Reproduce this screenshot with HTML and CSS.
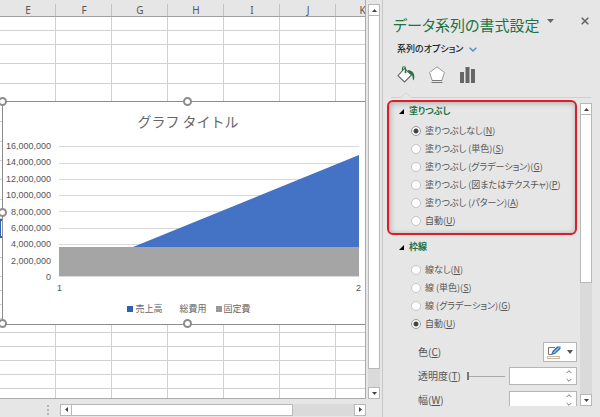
FILE: index.html
```html
<!DOCTYPE html>
<html lang="ja">
<head>
<meta charset="utf-8">
<title>データ系列の書式設定</title>
<link rel="stylesheet" href="styles.css">
</head>
<body>
<div class="app">
  <main class="workbook">
    <div class="upper">
      <div class="sheet">
        <table class="cells">
          <thead><tr><th>E</th><th>F</th><th>G</th><th>H</th><th>I</th><th>J</th><th>K</th></tr></thead>
          <tbody>
            <tr><td><td><td><td><td><td><td></tr>
            <tr><td><td><td><td><td><td><td></tr>
            <tr><td><td><td><td><td><td><td></tr>
            <tr><td><td><td><td><td><td><td></tr>
            <tr><td><td><td><td><td><td><td></tr>
            <tr><td><td><td><td><td><td><td></tr>
            <tr><td><td><td><td><td><td><td></tr>
            <tr><td><td><td><td><td><td><td></tr>
            <tr><td><td><td><td><td><td><td></tr>
            <tr><td><td><td><td><td><td><td></tr>
            <tr><td><td><td><td><td><td><td></tr>
            <tr class="picked"><td><td><td><td><td><td><td></tr>
            <tr><td><td><td><td><td><td><td></tr>
            <tr><td><td><td><td><td><td><td></tr>
            <tr><td><td><td><td><td><td><td></tr>
            <tr><td><td><td><td><td><td><td></tr>
            <tr><td><td><td><td><td><td><td></tr>
            <tr><td><td><td><td><td><td><td></tr>
            <tr><td><td><td><td><td><td><td></tr>
            <tr><td><td><td><td><td><td><td></tr>
            <tr><td><td><td><td><td><td><td></tr>
            <tr><td><td><td><td><td><td><td></tr>
            <tr><td><td><td><td><td><td><td></tr>
          </tbody>
        </table>

        <section class="chart">
          <h2 class="chart-title">グラフ タイトル</h2>
          <div class="plot-row">
            <ul class="y-axis">
              <li>16,000,000</li><li>14,000,000</li><li>12,000,000</li><li>10,000,000</li><li>8,000,000</li><li>6,000,000</li><li>4,000,000</li><li>2,000,000</li><li>0</li>
            </ul>
            <svg class="plot" viewBox="0 0 300 131" preserveAspectRatio="none">
              <path d="M0 .5H300M0 17.500H300M0 33.500H300M0 49.500H300M0 65.500H300M0 82.500H300M0 98.500H300M0 114.500H300M0 130.500H300" stroke="#d9d9d9" fill="none"/>
              <path d="M74 101L300 9V101Z" fill="#4472c4"/>
              <path d="M0 101H300V130H0Z" fill="#a5a5a5"/>
            </svg>
          </div>
          <div class="x-axis"><span>1</span><span>2</span></div>
          <ul class="legend">
            <li><i class="key blue"></i>売上高</li>
            <li><i class="key"></i>総費用</li>
            <li><i class="key grey"></i>固定費</li>
          </ul>
          <i class="handle top-left"></i><i class="handle top"></i><i class="handle left"></i><i class="handle bottom-left"></i><i class="handle bottom"></i>
        </section>
      </div>
      <div class="vbar sheet-vbar">
        <button class="cap" aria-label="上へ"><svg viewBox="0 0 5 3"><path d="M0 3L2.500 0L5 3Z"/></svg></button>
        <div class="thumb"></div>
        <div class="track"></div>
        <button class="cap" aria-label="下へ"><svg viewBox="0 0 5 3"><path d="M0 0H5L2.500 3Z"/></svg></button>
      </div>
    </div>
    <div class="lower">
      <svg class="grip" viewBox="0 0 2 10"><path d="M0 0H2V2H0ZM0 4H2V6H0ZM0 8H2V10H0Z"/></svg>
      <div class="hbar">
        <button class="cap" aria-label="左へ"><svg class="side" viewBox="0 0 3 5"><path d="M3 0V5L0 2.500Z"/></svg></button>
        <div class="thumb"></div>
        <div class="track"></div>
        <button class="cap" aria-label="右へ"><svg class="side" viewBox="0 0 3 5"><path d="M0 0V5L3 2.500Z"/></svg></button>
      </div>
    </div>
  </main>

  <aside class="pane">
    <header class="pane-head">
      <h1>データ系列の書式設定</h1>
      <button class="plain menu" aria-label="作業ウィンドウ オプション"><svg width="7" height="4" viewBox="0 0 7 4"><path d="M0 0H7L3.500 4Z" fill="#666"/></svg></button>
      <button class="plain close" aria-label="閉じる"><svg width="8" height="8" viewBox="0 0 8 8"><path d="M.7.7L7.300 7.300M7.300.7L.7 7.300" stroke="#666" stroke-width="1.600"/></svg></button>
    </header>
    <button class="plain series">系列のオプション<svg width="8" height="5" viewBox="0 0 8 5"><path d="M.7.7L4 4L7.300.7" fill="none" stroke="#3c8fd0" stroke-width="1.300"/></svg></button>
    <nav class="tabs">
      <button class="plain" aria-label="塗りつぶしと線"><svg width="18" height="18" viewBox="0 0 18 18"><path d="M7.500 2.500L14.500 9L7.500 16L1 9.700Z" fill="#fff" stroke="#666" stroke-width="1.100"/><path d="M5.500 5V2.200Q5.500.8 7 .8Q8.500.8 8.500 2.200V6" fill="none" stroke="#217346" stroke-width="1.100"/><circle cx="8.500" cy="6.300" r="1" fill="#217346"/><path d="M11 4Q16 4.500 17.200 9Q17.600 12 16.700 14.500Q15.500 13 15.300 9.500L11 5.500Z" fill="#217346"/></svg></button>
      <button class="plain" aria-label="効果"><svg width="18" height="18" viewBox="0 0 18 18"><path d="M9 .8L16.500 6.500L13.800 14.500H4.200L1.500 6.500Z" fill="#fff" stroke="#999"/><path d="M4 14.500H14M3.500 16.500H14.500" stroke="#777" stroke-width="1.200"/></svg></button>
      <button class="plain" aria-label="系列のオプション"><svg width="18" height="18" viewBox="0 0 18 18"><path d="M1 6H5V17H1ZM6.500 1H10.500V17H6.500ZM12 3H16V17H12Z" fill="#666"/></svg></button>
    </nav>
    <svg class="notch" viewBox="0 0 200 6" preserveAspectRatio="xMinYMid slice"><path d="M0 5.500H10L15 .5L20 5.500H200" fill="none" stroke="#d0d0d0"/></svg>

    <div class="pane-body">
      <form class="options">
        <fieldset class="group fill">
          <legend><svg width="5" height="5" viewBox="0 0 5 5"><path d="M5 0V5H0Z"/></svg>塗りつぶし</legend>
          <label><input type="radio" name="fill" checked><span>塗りつぶしなし(<u>N</u>)</span></label>
          <label><input type="radio" name="fill"><span>塗りつぶし (単色)(<u>S</u>)</span></label>
          <label><input type="radio" name="fill"><span>塗りつぶし (グラデーション)(<u>G</u>)</span></label>
          <label><input type="radio" name="fill"><span>塗りつぶし (図またはテクスチャ)(<u>P</u>)</span></label>
          <label><input type="radio" name="fill"><span>塗りつぶし (パターン)(<u>A</u>)</span></label>
          <label><input type="radio" name="fill"><span>自動(<u>U</u>)</span></label>
        </fieldset>
        <fieldset class="group line">
          <legend><svg width="5" height="5" viewBox="0 0 5 5"><path d="M5 0V5H0Z"/></svg>枠線</legend>
          <label><input type="radio" name="line"><span>線なし(<u>N</u>)</span></label>
          <label><input type="radio" name="line"><span>線 (単色)(<u>S</u>)</span></label>
          <label><input type="radio" name="line"><span>線 (グラデーション)(<u>G</u>)</span></label>
          <label><input type="radio" name="line" checked><span>自動(<u>U</u>)</span></label>
        </fieldset>
        <div class="fields">
          <div class="field">
            <label for="color">色(<u>C</u>)</label>
            <button type="button" id="color" class="color"><svg width="14" height="13" viewBox="0 0 14 13"><path d="M8 1.500H1.500V8.500H5" fill="none" stroke="#777"/><path d="M4 9L5.500 5L10 .5H13.500V3L8 8Z" fill="#2e75b6"/><path d="M6.500 7L12 1.500" stroke="#fff" stroke-width=".9"/><path d="M.5 10.500H12.500V12.500H.5Z" fill="#fff" stroke="#c0a48c" stroke-width=".8"/></svg><svg width="6" height="4" viewBox="0 0 6 4"><path d="M0 0H6L3 4Z" fill="#555"/></svg></button>
          </div>
          <div class="field">
            <label for="alpha">透明度(<u>T</u>)</label>
            <input type="range" min="0" max="100" value="0" aria-label="透明度">
            <span class="spin"><input type="text" id="alpha"><svg width="6" height="12" viewBox="0 0 6 12"><path d="M.7 3L3 .7L5.300 3M.7 9L3 11.300L5.300 9"/></svg></span>
          </div>
          <div class="field">
            <label for="width">幅(<u>W</u>)</label>
            <span class="spin"><input type="text" id="width"><svg width="6" height="12" viewBox="0 0 6 12"><path d="M.7 3L3 .7L5.300 3M.7 9L3 11.300L5.300 9"/></svg></span>
          </div>
        </div>
      </form>
      <div class="vbar pane-vbar">
        <button class="cap" aria-label="上へ"><svg viewBox="0 0 5 3"><path d="M0 3L2.500 0L5 3Z"/></svg></button>
        <div class="thumb"></div>
        <div class="track"></div>
        <button class="cap" aria-label="下へ"><svg viewBox="0 0 5 3"><path d="M0 0H5L2.500 3Z"/></svg></button>
      </div>
    </div>
  </aside>
</div>
</body>
</html>
```
FILE: styles.css
```css
* { box-sizing: border-box; }

body {
  margin: 0;
  background: #e6e6e6;
  color: #555;
  font: 10px/14px "Noto Sans CJK JP", sans-serif;
}

h1, h2, ul { margin: 0; padding: 0; font-weight: 400; list-style: none; }
button, input { font: inherit; color: inherit; margin: 0; padding: 0; }
svg { display: block; flex: none; }

.plain { border: 0; background: none; }

.app { display: flex; height: 100vh; overflow: hidden; }

/* Workbook */
.workbook { flex: 1; min-width: 0; display: flex; flex-direction: column; }
.upper { flex: 1; min-height: 0; display: flex; gap: 2px; }

.sheet {
  position: relative;
  flex: 1;
  min-width: 0;
  overflow: hidden;
  border-right: 1px solid #ababab;
  border-bottom: 1px solid #ababab;
}

.cells { table-layout: fixed; width: 392px; border-spacing: 0; background: #fff; }
.cells th {
  height: 17px;
  padding: 4px 0 0;
  background: linear-gradient(#e6e6e6 4px, transparent 4px), linear-gradient(to left, #c4c4c4 1px, #e6e6e6 1px);
  border-bottom: 1px solid #a0a0a0;
  font: 10px/12px "Noto Sans", sans-serif;
}
.cells th:last-child { padding-right: 3px; }
.cells td { height: 14px; padding: 0; border: solid #d0d0d0; border-width: 0 1px 1px 0; }
.cells tr:nth-child(n+3):nth-child(-n+14) td { height: 19px; }
.cells tr:nth-child(3n+4):nth-child(-n+13) td { height: 20px; }
.cells .picked td:first-child { border-left: 1px solid #2f5fb8; border-bottom: 2px solid #2f5fb8; border-top: 2px solid #2f5fb8; }

/* Scroll bars */
.vbar { display: flex; flex-direction: column; width: 12px; }
.hbar { display: flex; flex: 1; height: 12px; }
.cap {
  display: grid;
  place-items: center;
  flex: none;
  width: 12px;
  height: 12px;
  padding: 0;
  background: #fff;
  border: 1px solid #b8b8b8;
}
.cap svg { width: 5px; height: 3px; fill: #444; }
.cap .side { width: 3px; height: 5px; }
.thumb { background: #fff; border: 1px solid #b8b8b8; }
.track { background: #dadada; }
.sheet-vbar { margin: 4px 2px 0 0; }
.sheet-vbar .thumb { flex: 20; border-top: 0; }
.sheet-vbar .track { flex: 1; }

.lower { display: flex; align-items: center; height: 18px; padding: 4px 16px 1px 47px; }
.grip { width: 2px; height: 10px; margin-right: 11px; fill: #b5b5b5; }
.hbar .thumb { flex: 18; border-left: 0; }
.hbar .track { flex: 5; }

/* Chart */
.chart {
  position: absolute;
  top: 101px;
  left: 2px;
  right: -8px;
  height: 224px;
  padding: 8px 13px 0 4px;
  background: #fff;
  border: 1px solid #8c8c8c;
}
.chart-title { padding-left: 10px; font-size: 14px; line-height: 22px; text-align: center; color: #666; }
.plot-row { display: flex; gap: 8px; padding-top: 6px; }
.y-axis {
  display: flex;
  flex-direction: column;
  justify-content: space-between;
  flex: none;
  width: 44px;
  height: 147px;
  font: 9px/16px "Liberation Sans", sans-serif;
  text-align: right;
}
.y-axis li { display: flex; justify-content: flex-end; }
.plot { flex: 1; min-width: 0; height: 131px; margin-top: 8px; }
.x-axis {
  display: flex;
  justify-content: space-between;
  margin: -4px -2px 0 50px;
  font: 9px/14px "Liberation Sans", sans-serif;
}
.legend { display: flex; gap: 9px; justify-content: center; padding: 7px 0 0 12px; font-size: 9px; color: #666; }
.legend li { display: flex; align-items: center; gap: 2px; }
.key { width: 6px; height: 6px; }
.blue { background: #2f5fb8; }
.grey { background: #999; }

.handle {
  position: absolute;
  width: 9px;
  height: 9px;
  margin: -5px;
  background: #fff;
  border: 2px solid #8c8c8c;
  border-radius: 50%;
}
.top-left { top: 0; left: 0; }
.top { top: 0; left: 50%; }
.left { top: 50%; left: 0; }
.bottom-left { top: 100%; left: 0; }
.bottom { top: 100%; left: 50%; }

/* Task pane */
.pane {
  display: flex;
  flex-direction: column;
  width: 218px;
  padding: 0 8px 11px 4px;
  border-left: 1px solid #c6c6c6;
  font-feature-settings: "palt";
}
.pane-head { display: flex; align-items: center; padding: 14px 3px 0 6px; }
.pane-head h1 { font-size: 15px; line-height: 22px; color: #217346; white-space: nowrap; }
.menu { margin: -8px 0 0 8px; }
.close { margin: -8px 0 0 auto; }
.series {
  display: flex;
  align-items: center;
  gap: 6px;
  margin: 6px 0 0 10px;
  font-size: 9px;
  font-weight: 500;
  color: #222;
}
.tabs { display: flex; gap: 13px; margin: 10px 0 0 10px; }
.notch { width: 200px; height: 6px; margin: 8px 0 0 4px; }

.pane-body { flex: 1; min-height: 0; display: flex; gap: 3px; padding-top: 2px; }
.options { flex: 1; min-width: 0; overflow: hidden; }
.group { margin: 0; padding: 0 0 0 24px; border: 0; min-width: 0; font-size: 9px; }
.group legend {
  display: flex;
  align-items: center;
  gap: 5px;
  margin-left: -12px;
  padding: 0;
  font-weight: 700;
  color: #217346;
}
.group label { display: flex; align-items: center; gap: 4px; height: 18px; white-space: nowrap; }
.fill {
  height: 135px;
  padding-left: 22px;
  border: 2px solid #dc1e28;
  border-radius: 6px;
  box-shadow: inset 2px 2px 5px #bbb, inset -1px -1px 4px #ccc;
}
.fill legend { float: left; width: 100%; padding: 2px 0 4px; }
.fill label { clear: both; }
.line { padding-top: 5px; }
.line legend { float: left; width: 100%; padding-bottom: 7px; }
.line label { clear: both; }

input[type="radio"] {
  appearance: none;
  width: 10px;
  height: 10px;
  background: #fff;
  border: 1px solid #c4c4c4;
  border-radius: 50%;
}
input[type="radio"]:checked { background: radial-gradient(circle, #444 2px, #fff 3px); border-color: #999; }

.fields { display: grid; gap: 6px; padding: 10px 0 0 31px; }
.field { display: flex; align-items: center; justify-content: space-between; height: 18px; }
.color {
  display: flex;
  align-items: center;
  justify-content: center;
  gap: 6px;
  width: 34px;
  height: 20px;
  background: #fff;
  border: 1px solid #b5b5b5;
}
.spin {
  display: flex;
  align-items: center;
  flex: none;
  width: 68px;
  height: 18px;
  padding-right: 4px;
  background: #fff;
  border: 1px solid #b5b5b5;
}
.spin input { flex: 1; min-width: 0; height: 100%; border: 0; background: none; }
.spin path { fill: none; stroke: #777; }

input[type="range"] {
  appearance: none;
  width: 38px;
  height: 8px;
  margin: 0 4px 0 auto;
  background: linear-gradient(#aaa, #aaa) center / 100% 1px no-repeat;
}
input[type="range"]::-webkit-slider-thumb { appearance: none; width: 2px; height: 8px; background: #777; }

.pane-vbar { margin-top: 3px; }
.pane-vbar .thumb { flex: 3; border-top: 0; }
.pane-vbar .track { flex: 2; }
```
